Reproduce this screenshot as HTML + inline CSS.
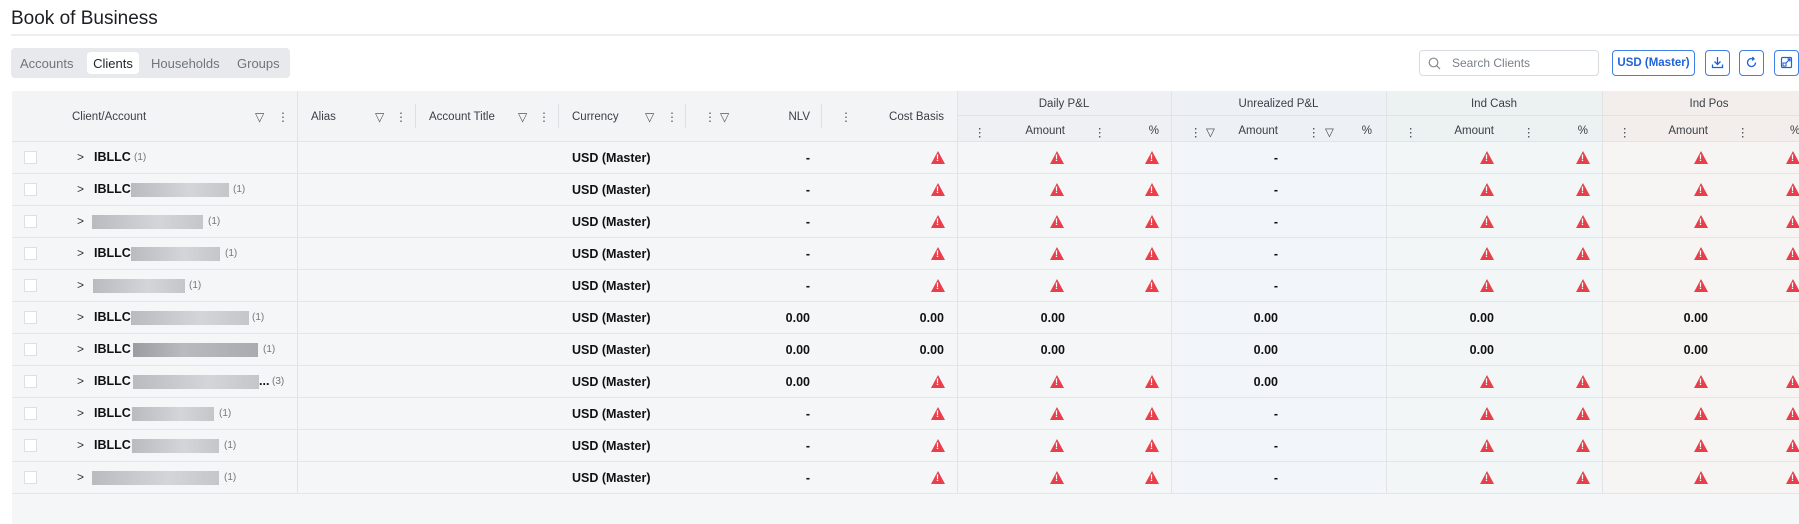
<!DOCTYPE html>
<html><head><meta charset="utf-8"><style>
*{box-sizing:border-box;margin:0;padding:0}
body{width:1799px;height:524px;overflow:hidden;background:#fff;font-family:"Liberation Sans",sans-serif;color:#1f2329;position:relative}
.a{position:absolute}
.title{left:11px;top:8px;font-size:19px;color:#1b1e23}
.div{left:11px;right:0;top:34px;height:2px;background:#eceef0}
.tabs{left:11px;top:48px;width:279px;height:30px;background:#e8e9ec;border-radius:4px}
.tab{top:0;height:30px;line-height:31px;font-size:13px;color:#70757c}
.tabon{background:#fff;border-radius:4px;top:4px;height:22px;line-height:23px;color:#1f2329}
.search{left:1419px;top:50px;width:180px;height:26px;border:1px solid #d8dbe0;border-radius:4px;font-size:12px;color:#7b8088;line-height:24px;padding-left:32px}
.btn{top:50px;height:26px;border:1px solid #3f7fe6;border-radius:4px;color:#1f62d8;font-size:11.5px;font-weight:bold;line-height:24px;text-align:center}
.tbl{left:12px;top:91px;right:0;bottom:0;background:#f5f6f8}
.hd{top:91px;height:51px;background:#f3f4f6;border-bottom:1px solid #e2e4e8}
.ht{font-size:11.5px;color:#3a3f46;top:111px}
.ic{font-size:12px;color:#555;top:110px}
.sep{width:1px;height:24px;top:104px;background:#dcdfe3}
.g{top:92px;height:24px;border-bottom:1px solid #dfe2e6;font-size:11.5px;color:#3a3f46;text-align:center;line-height:25px}
.st{font-size:11.5px;color:#3a3f46;top:125px}
.row{left:12px;right:0;height:32px;border-bottom:1px solid #e3e5e9}
.cb{left:12px;top:9px;width:13px;height:13px;background:#fff;border:1px solid #dcdfe3}
.chev{left:65px;top:8px;font-size:12px;color:#333}
.nm{top:8px;font-size:12.5px;font-weight:bold;color:#111}
.bar{top:9px;height:14px;background:linear-gradient(90deg,#b9bbbf,#d3d5d8 60%,#c4c6c9)}
.cnt{top:10px;font-size:10px;color:#777}
.v{top:9px;font-size:12.5px;font-weight:bold;color:#111;text-align:right}
.w{top:9px;width:0;height:0;border-left:7px solid transparent;border-right:7px solid transparent;border-bottom:13px solid #e8404a}
.w::after{content:"!";position:absolute;left:-2px;top:2px;font-size:9px;color:#fff;font-weight:bold}
.vl{top:91px;bottom:30px;width:1px;background:#e1e3e7}
.r{position:absolute;left:0;width:1799px;height:32px}
.cur{left:572px}
</style></head><body>
<div class="a title">Book of Business</div>
<div class="a div"></div>
<div class="a tabs">
<div class="a tab" style="left:9px">Accounts</div>
<div class="a tab tabon" style="left:76px;width:52px;text-align:center">Clients</div>
<div class="a tab" style="left:140px">Households</div>
<div class="a tab" style="left:226px">Groups</div>
</div>
<div class="a search">Search Clients</div>
<svg class="a" style="left:1428px;top:57px" width="13" height="13" viewBox="0 0 13 13"><circle cx="5.5" cy="5.5" r="4.3" fill="none" stroke="#888" stroke-width="1.2"/><path d="M8.7 8.7L12 12" stroke="#888" stroke-width="1.2"/></svg>
<div class="a btn" style="left:1612px;width:83px">USD (Master)</div>
<div class="a btn" style="left:1705px;width:25px"><svg width="13" height="13" viewBox="0 0 13 13" style="margin-top:5px"><path d="M6.5 1v7M3.5 5.5l3 3 3-3M1.5 8.5v3h10v-3" fill="none" stroke="#1f62d8" stroke-width="1.3"/></svg></div>
<div class="a btn" style="left:1739px;width:25px"><svg width="13" height="13" viewBox="0 0 13 13" style="margin-top:5px"><path d="M10.5 6.5A4 4 0 1 1 8 2.8M7.5 1l1.5 2-2 1.3" fill="none" stroke="#1f62d8" stroke-width="1.3"/></svg></div>
<div class="a btn" style="left:1774px;width:25px"><svg width="13" height="13" viewBox="0 0 13 13" style="margin-top:5px"><rect x="1.5" y="1.5" width="10" height="10" rx="1" fill="none" stroke="#1f62d8" stroke-width="1.2"/><path d="M6 7l4-4M7.5 3H10v2.5" fill="none" stroke="#1f62d8" stroke-width="1.2"/><rect x="3" y="7" width="3" height="3" fill="none" stroke="#1f62d8"/></svg></div>

<div class="a tbl"></div>
<div class="a" style="left:1171px;width:215px;top:91px;height:403px;background:#f2f5f9"></div>
<div class="a" style="left:1386px;width:216px;top:91px;height:403px;background:#f3f6f6"></div>
<div class="a" style="left:1602px;width:197px;top:91px;height:403px;background:#f7f5f4"></div>
<div class="a hd" style="left:12px;width:945px"></div>
<div class="a hd" style="left:957px;width:214px;background:#eef0f4"></div>
<div class="a hd" style="left:1171px;width:215px;background:#edf1f6"></div>
<div class="a hd" style="left:1386px;width:216px;background:#ecf1f1"></div>
<div class="a hd" style="left:1602px;width:197px;background:#f3eeeb"></div>
<div class="a vl" style="left:957px;top:91px;height:403px"></div>
<div class="a vl" style="left:1171px;top:91px;height:403px"></div>
<div class="a vl" style="left:1386px;top:91px;height:403px"></div>
<div class="a vl" style="left:1602px;top:91px;height:403px"></div>
<div class="a vl" style="left:297px;top:91px;height:403px"></div>

<div class="a ht" style="left:72px">Client/Account</div>
<div class="a ic" style="left:255px">▽</div><div class="a ic" style="left:277px">⋮</div>
<div class="a ht" style="left:311px">Alias</div>
<div class="a ic" style="left:375px">▽</div><div class="a ic" style="left:395px">⋮</div>
<div class="a sep" style="left:415px"></div>
<div class="a ht" style="left:429px">Account Title</div>
<div class="a ic" style="left:518px">▽</div><div class="a ic" style="left:538px">⋮</div>
<div class="a sep" style="left:558px"></div>
<div class="a ht" style="left:572px">Currency</div>
<div class="a ic" style="left:645px">▽</div><div class="a ic" style="left:666px">⋮</div>
<div class="a sep" style="left:685px"></div>
<div class="a ic" style="left:704px">⋮</div><div class="a ic" style="left:720px">▽</div>
<div class="a ht" style="left:760px;width:50px;text-align:right">NLV</div>
<div class="a sep" style="left:821px"></div>
<div class="a ic" style="left:840px">⋮</div>
<div class="a ht" style="left:880px;width:64px;text-align:right">Cost Basis</div>

<div class="a g" style="left:957px;width:214px">Daily P&amp;L</div>
<div class="a g" style="left:1171px;width:215px">Unrealized P&amp;L</div>
<div class="a g" style="left:1386px;width:216px">Ind Cash</div>
<div class="a g" style="left:1602px;width:214px">Ind Pos</div>

<div class="a ic st" style="left:974px">⋮</div><div class="a st" style="left:1015px;width:50px;text-align:right">Amount</div><div class="a ic st" style="left:1094px">⋮</div><div class="a st" style="left:1140px;width:19px;text-align:right">%</div>
<div class="a ic st" style="left:1190px">⋮</div><div class="a ic st" style="left:1206px">▽</div><div class="a st" style="left:1228px;width:50px;text-align:right">Amount</div><div class="a ic st" style="left:1308px">⋮</div><div class="a ic st" style="left:1325px">▽</div><div class="a st" style="left:1353px;width:19px;text-align:right">%</div>
<div class="a ic st" style="left:1405px">⋮</div><div class="a st" style="left:1444px;width:50px;text-align:right">Amount</div><div class="a ic st" style="left:1523px">⋮</div><div class="a st" style="left:1569px;width:19px;text-align:right">%</div>
<div class="a ic st" style="left:1619px">⋮</div><div class="a st" style="left:1658px;width:50px;text-align:right">Amount</div><div class="a ic st" style="left:1737px">⋮</div><div class="a st" style="left:1790px">%</div>

<div class="a" style="left:0;top:142px;width:1799px">
<div class="a row" style="top:0"><div class="a cb"></div><div class="a chev">&gt;</div><div class="a nm" style="left:82px">IBLLC</div><div class="a cnt" style="left:122px">(1)</div></div>
<div class="a row" style="top:32px"><div class="a cb"></div><div class="a chev">&gt;</div><div class="a nm" style="left:82px">IBLLC</div><div class="a bar" style="left:119px;width:98px"></div><div class="a cnt" style="left:221px">(1)</div></div>
<div class="a row" style="top:64px"><div class="a cb"></div><div class="a chev">&gt;</div><div class="a bar" style="left:80px;width:111px"></div><div class="a cnt" style="left:196px">(1)</div></div>
<div class="a row" style="top:96px"><div class="a cb"></div><div class="a chev">&gt;</div><div class="a nm" style="left:82px">IBLLC</div><div class="a bar" style="left:119px;width:89px"></div><div class="a cnt" style="left:213px">(1)</div></div>
<div class="a row" style="top:128px"><div class="a cb"></div><div class="a chev">&gt;</div><div class="a bar" style="left:81px;width:92px"></div><div class="a cnt" style="left:177px">(1)</div></div>
<div class="a row" style="top:160px"><div class="a cb"></div><div class="a chev">&gt;</div><div class="a nm" style="left:82px">IBLLC</div><div class="a bar" style="left:119px;width:118px"></div><div class="a cnt" style="left:240px">(1)</div></div>
<div class="a row" style="top:192px"><div class="a cb"></div><div class="a chev">&gt;</div><div class="a nm" style="left:82px">IBLLC</div><div class="a bar" style="left:121px;width:125px;background:linear-gradient(90deg,#9a9ca1,#b8babe 40%,#a9abaf)"></div><div class="a cnt" style="left:251px">(1)</div></div>
<div class="a row" style="top:224px"><div class="a cb"></div><div class="a chev">&gt;</div><div class="a nm" style="left:82px">IBLLC</div><div class="a bar" style="left:121px;width:126px"></div><div class="a nm" style="left:247px">...</div><div class="a cnt" style="left:260px">(3)</div></div>
<div class="a row" style="top:256px"><div class="a cb"></div><div class="a chev">&gt;</div><div class="a nm" style="left:82px">IBLLC</div><div class="a bar" style="left:120px;width:82px"></div><div class="a cnt" style="left:207px">(1)</div></div>
<div class="a row" style="top:288px"><div class="a cb"></div><div class="a chev">&gt;</div><div class="a nm" style="left:82px">IBLLC</div><div class="a bar" style="left:120px;width:87px"></div><div class="a cnt" style="left:212px">(1)</div></div>
<div class="a row" style="top:320px"><div class="a cb"></div><div class="a chev">&gt;</div><div class="a bar" style="left:80px;width:127px"></div><div class="a cnt" style="left:212px">(1)</div></div>
</div>

<div class="r" style="top:142px"><div class="a v cur">USD (Master)</div><div class="a v" style="left:780px;width:30px">-</div><div class="a w" style="left:931px"></div><div class="a w" style="left:1050px"></div><div class="a w" style="left:1145px"></div><div class="a v" style="left:1248px;width:30px">-</div><div class="a w" style="left:1480px"></div><div class="a w" style="left:1576px"></div><div class="a w" style="left:1694px"></div><div class="a w" style="left:1786px"></div></div>
<div class="r" style="top:174px"><div class="a v cur">USD (Master)</div><div class="a v" style="left:780px;width:30px">-</div><div class="a w" style="left:931px"></div><div class="a w" style="left:1050px"></div><div class="a w" style="left:1145px"></div><div class="a v" style="left:1248px;width:30px">-</div><div class="a w" style="left:1480px"></div><div class="a w" style="left:1576px"></div><div class="a w" style="left:1694px"></div><div class="a w" style="left:1786px"></div></div>
<div class="r" style="top:206px"><div class="a v cur">USD (Master)</div><div class="a v" style="left:780px;width:30px">-</div><div class="a w" style="left:931px"></div><div class="a w" style="left:1050px"></div><div class="a w" style="left:1145px"></div><div class="a v" style="left:1248px;width:30px">-</div><div class="a w" style="left:1480px"></div><div class="a w" style="left:1576px"></div><div class="a w" style="left:1694px"></div><div class="a w" style="left:1786px"></div></div>
<div class="r" style="top:238px"><div class="a v cur">USD (Master)</div><div class="a v" style="left:780px;width:30px">-</div><div class="a w" style="left:931px"></div><div class="a w" style="left:1050px"></div><div class="a w" style="left:1145px"></div><div class="a v" style="left:1248px;width:30px">-</div><div class="a w" style="left:1480px"></div><div class="a w" style="left:1576px"></div><div class="a w" style="left:1694px"></div><div class="a w" style="left:1786px"></div></div>
<div class="r" style="top:270px"><div class="a v cur">USD (Master)</div><div class="a v" style="left:780px;width:30px">-</div><div class="a w" style="left:931px"></div><div class="a w" style="left:1050px"></div><div class="a w" style="left:1145px"></div><div class="a v" style="left:1248px;width:30px">-</div><div class="a w" style="left:1480px"></div><div class="a w" style="left:1576px"></div><div class="a w" style="left:1694px"></div><div class="a w" style="left:1786px"></div></div>
<div class="r" style="top:302px"><div class="a v cur">USD (Master)</div><div class="a v" style="left:760px;width:50px">0.00</div><div class="a v" style="left:894px;width:50px">0.00</div><div class="a v" style="left:1015px;width:50px">0.00</div><div class="a v" style="left:1228px;width:50px">0.00</div><div class="a v" style="left:1444px;width:50px">0.00</div><div class="a v" style="left:1658px;width:50px">0.00</div></div>
<div class="r" style="top:334px"><div class="a v cur">USD (Master)</div><div class="a v" style="left:760px;width:50px">0.00</div><div class="a v" style="left:894px;width:50px">0.00</div><div class="a v" style="left:1015px;width:50px">0.00</div><div class="a v" style="left:1228px;width:50px">0.00</div><div class="a v" style="left:1444px;width:50px">0.00</div><div class="a v" style="left:1658px;width:50px">0.00</div></div>
<div class="r" style="top:366px"><div class="a v cur">USD (Master)</div><div class="a v" style="left:760px;width:50px">0.00</div><div class="a w" style="left:931px"></div><div class="a w" style="left:1050px"></div><div class="a w" style="left:1145px"></div><div class="a v" style="left:1228px;width:50px">0.00</div><div class="a w" style="left:1480px"></div><div class="a w" style="left:1576px"></div><div class="a w" style="left:1694px"></div><div class="a w" style="left:1786px"></div></div>
<div class="r" style="top:398px"><div class="a v cur">USD (Master)</div><div class="a v" style="left:780px;width:30px">-</div><div class="a w" style="left:931px"></div><div class="a w" style="left:1050px"></div><div class="a w" style="left:1145px"></div><div class="a v" style="left:1248px;width:30px">-</div><div class="a w" style="left:1480px"></div><div class="a w" style="left:1576px"></div><div class="a w" style="left:1694px"></div><div class="a w" style="left:1786px"></div></div>
<div class="r" style="top:430px"><div class="a v cur">USD (Master)</div><div class="a v" style="left:780px;width:30px">-</div><div class="a w" style="left:931px"></div><div class="a w" style="left:1050px"></div><div class="a w" style="left:1145px"></div><div class="a v" style="left:1248px;width:30px">-</div><div class="a w" style="left:1480px"></div><div class="a w" style="left:1576px"></div><div class="a w" style="left:1694px"></div><div class="a w" style="left:1786px"></div></div>
<div class="r" style="top:462px"><div class="a v cur">USD (Master)</div><div class="a v" style="left:780px;width:30px">-</div><div class="a w" style="left:931px"></div><div class="a w" style="left:1050px"></div><div class="a w" style="left:1145px"></div><div class="a v" style="left:1248px;width:30px">-</div><div class="a w" style="left:1480px"></div><div class="a w" style="left:1576px"></div><div class="a w" style="left:1694px"></div><div class="a w" style="left:1786px"></div></div>
</body></html>
